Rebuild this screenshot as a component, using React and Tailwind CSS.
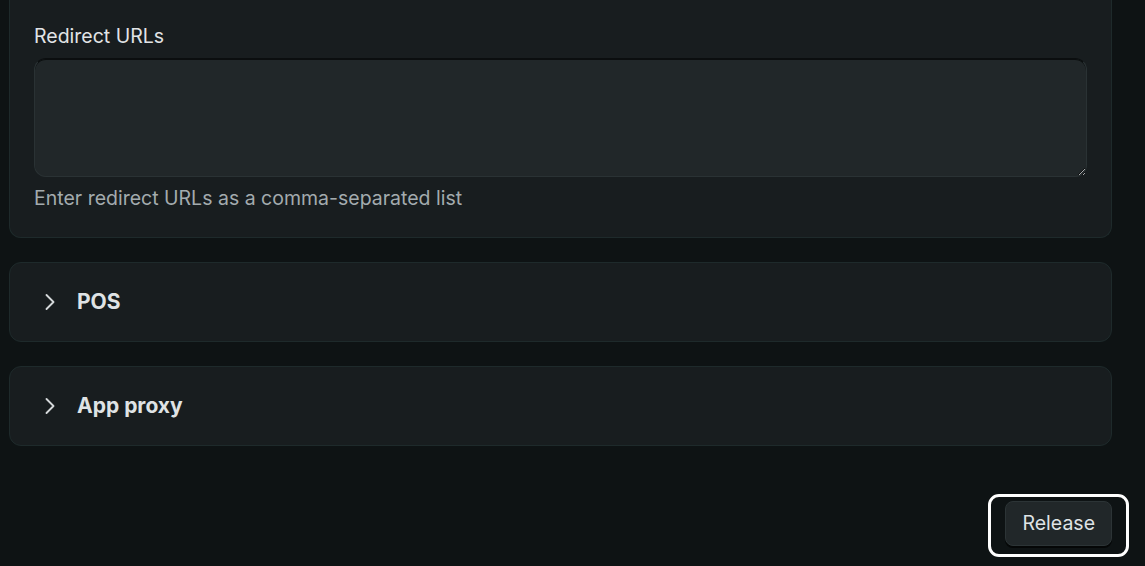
import { ChevronRight } from 'lucide-react'

function Collapsed({ title }) {
  return (
    <div className="rounded-xl border border-[#1e2a2b] bg-[#181d1f]">
      <button type="button" className="flex h-[78px] w-full items-center gap-[13px] px-[26px] text-left">
        <ChevronRight className="h-7 w-7 text-[#d4d8da]" strokeWidth={1.6} />
        <span className="text-[21px] font-bold text-[#dfe3e5]">{title}</span>
      </button>
    </div>
  )
}

export default function App() {
  return (
    <div className="min-h-[566px] bg-[#0e1314] pl-[9px] pr-[33px] font-['Inter',sans-serif]">
      <div className="flex flex-col gap-6">
        {/* Redirect URLs card */}
        <div className="-mt-3 rounded-b-xl border border-t-0 border-[#1e2a2b] bg-[#181d1f] px-6 pb-[25px] pt-[34px]">
          <label className="block text-[19.5px] leading-7 text-[#e1e4e6]">Redirect URLs</label>
          <textarea
            className="mt-2 block h-[119px] w-full resize-y rounded-xl border border-[#2a3234] border-t-[#0b0e0f] bg-[#212729] px-3 py-2 text-[19.5px] text-[#dfe3e5] shadow-[inset_0_1px_0_#0b0e0f] outline-none"
          />
          <p className="mt-[7px] text-[19.5px] leading-7 text-[#a3abae]">Enter redirect URLs as a comma-separated list</p>
        </div>

        <Collapsed title="POS" />
        <Collapsed title="App proxy" />
      </div>

      <div className="mt-[48px] flex justify-end">
        <div className="-mr-[17px] rounded-[11px] border-[3px] border-white px-[14px] pb-[8px] pt-[4px]">
          <button
            type="button"
            className="h-[45px] rounded-lg border border-[#2c3436] bg-[#212729] px-4 text-[19.5px] text-[#dfe3e5] shadow-[0_2px_0_#050707]"
          >
            Release
          </button>
        </div>
      </div>
    </div>
  )
}
